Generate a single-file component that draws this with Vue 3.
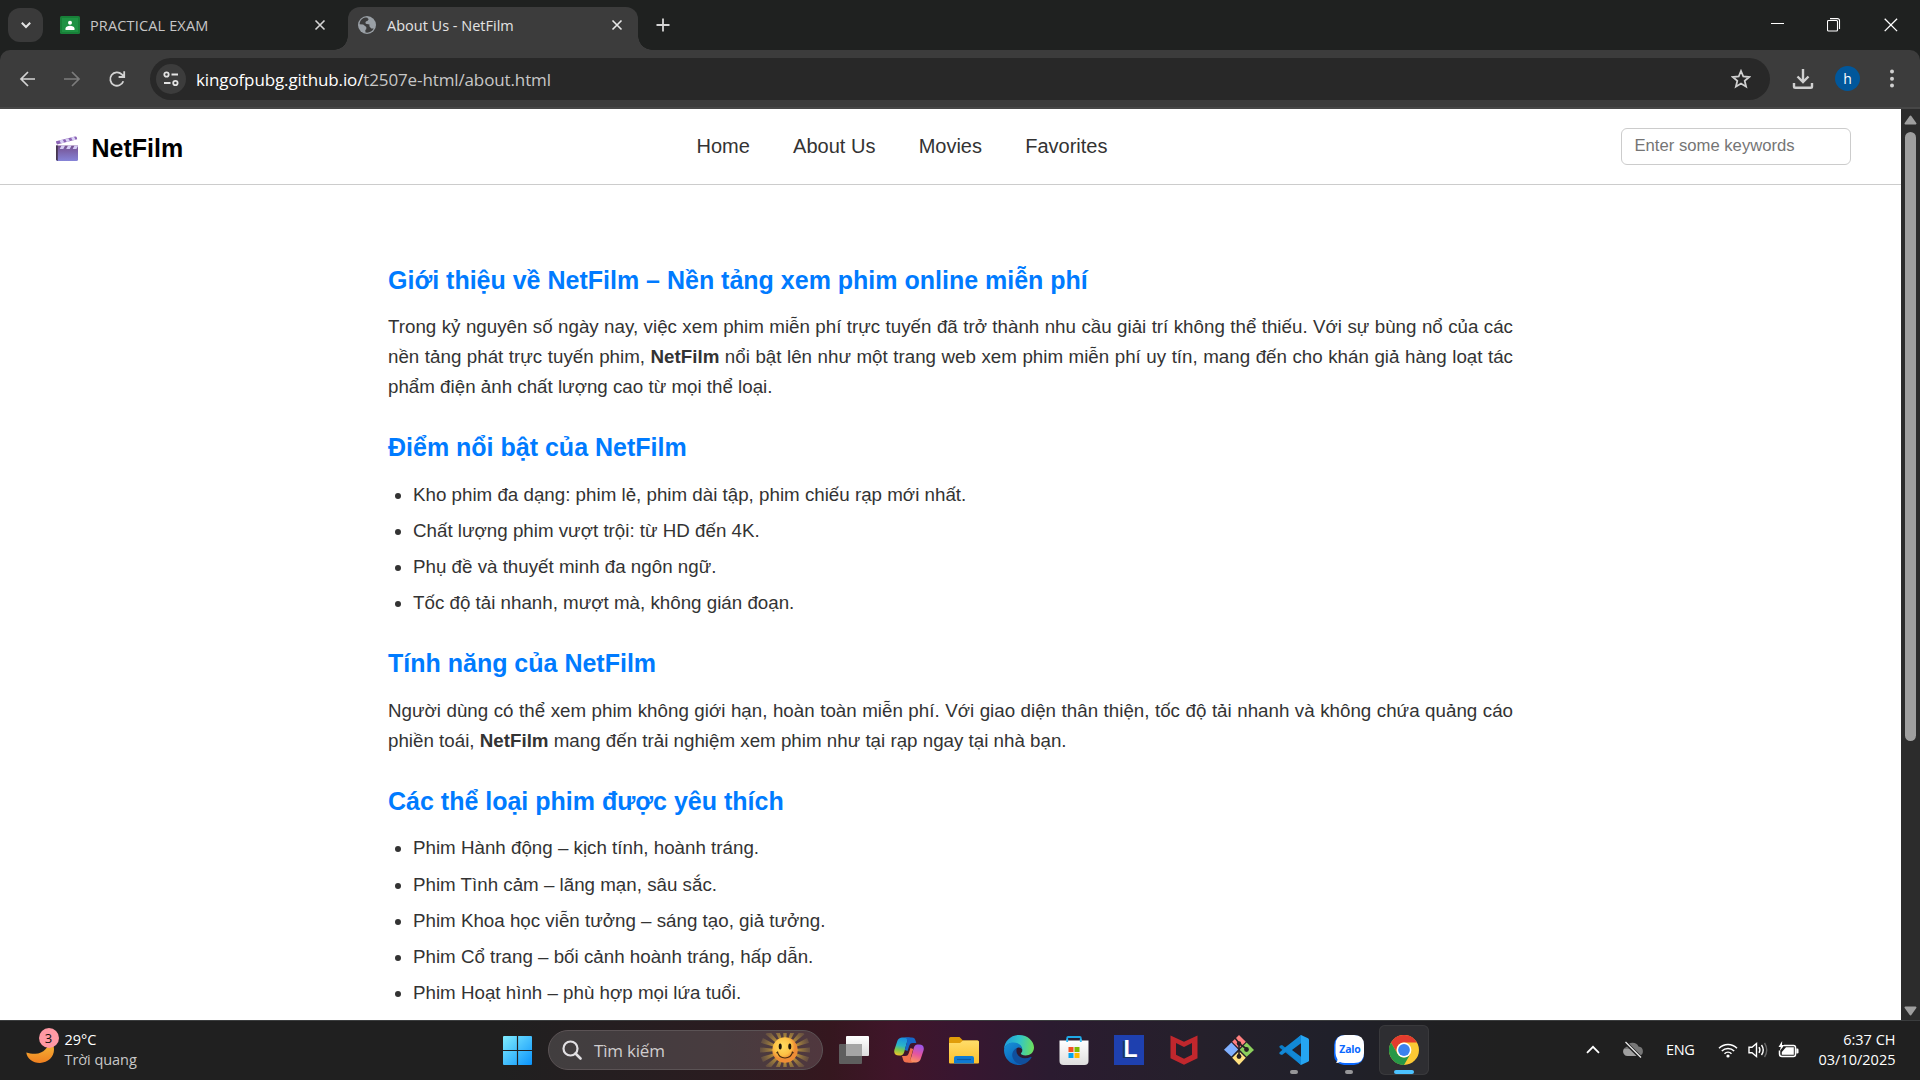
<script setup>
const nav = ['Home', 'About Us', 'Movies', 'Favorites']
const highlights = [
  'Kho phim đa dạng: phim lẻ, phim dài tập, phim chiếu rạp mới nhất.',
  'Chất lượng phim vượt trội: từ HD đến 4K.',
  'Phụ đề và thuyết minh đa ngôn ngữ.',
  'Tốc độ tải nhanh, mượt mà, không gián đoạn.',
]
const genres = [
  'Phim Hành động – kịch tính, hoành tráng.',
  'Phim Tình cảm – lãng mạn, sâu sắc.',
  'Phim Khoa học viễn tưởng – sáng tạo, giả tưởng.',
  'Phim Cổ trang – bối cảnh hoành tráng, hấp dẫn.',
  'Phim Hoạt hình – phù hợp mọi lứa tuổi.',
  'Phim Tài liệu – cùng hiểu nhiều hơn.',
]
const rays = Array.from({ length: 16 }, (_, i) => i * 22.5)
</script>

<template>
  <div class="screen">
    <div class="tabs">
      <div class="tabmenu">
        <svg width="12" height="12" viewBox="0 0 12 12"><path d="M1.8 3.8 6 8l4.200-4.200" fill="none" stroke="#e3e3e3" stroke-width="2" /></svg>
      </div>
      <div class="tab first">
        <svg width="20" height="18" viewBox="0 0 20 18">
          <rect width="20" height="18" rx="1.500" fill="#188038" /><rect x="2" y="2" width="16" height="14" fill="#1e9243" />
          <circle cx="10" cy="6.800" r="2" fill="#fff" /><path d="M5.500 14v-1.500c0-2 2.500-2.800 4.500-2.800s4.500.8 4.500 2.800V14z" fill="#fff" />
        </svg>
        <span class="t1">PRACTICAL EXAM</span>
        <svg class="x" width="12" height="12" viewBox="0 0 12 12"><path d="M1.500 1.500l9 9m0-9l-9 9" stroke="#d5d5d5" stroke-width="1.600" /></svg>
      </div>
      <div class="tab active">
        <svg width="18" height="18" viewBox="0 0 18 18">
          <circle cx="9" cy="9" r="9" fill="#9aa0a6" />
          <path d="M7.500 1.600C4 2.200 1.800 5 1.600 8.200l3.600.3 3.100 2.500v2.300l-1 .8.200 2.400c3.300.7 6.800-1 8.200-3.900l-2.500-.2-1.800-2.200.1-1.700-3.700-.8-.4-1.700 2.500-1.600 1-1.800c-1-.9-2.200-1.300-3.400-1z" fill="#3c3c3c" />
          <path d="M8.500 1.500c3 0 5.500 1.400 6.800 4l-2.900 1.100-1.900 1.300-2.100-.7-.3-1.500 2.300-.8.800-1.600z" fill="#9aa0a6" />
        </svg>
        <span class="t2">About Us - NetFilm</span>
        <svg class="x" width="12" height="12" viewBox="0 0 12 12"><path d="M1.500 1.500l9 9m0-9l-9 9" stroke="#e8e8e8" stroke-width="1.600" /></svg>
      </div>
      <svg class="plus" width="14" height="14" viewBox="0 0 14 14"><path d="M7 .5v13M.5 7h13" stroke="#d5d5d5" stroke-width="1.800" /></svg>
      <div class="winbtns">
        <svg width="14" height="14" viewBox="0 0 14 14"><path d="M1 5.500h13" stroke="#fff" stroke-width="1" /></svg>
        <svg width="14" height="14" viewBox="0 0 14 14" fill="none" stroke="#fff" stroke-width="1.100"><rect x=".5" y="2.500" width="10" height="10.500" rx="1" /><path d="M3 .6h7.500a2 2 0 0 1 2 2V11" /></svg>
        <svg width="14" height="14" viewBox="0 0 14 14"><path d="M.7.7l12.400 12.400m0-12.400L.7 13.100" stroke="#fff" stroke-width="1.300" /></svg>
      </div>
    </div>

    <div class="toolbar">
      <svg class="back" width="18" height="18" viewBox="0 0 18 18"><path d="M16 9H2.500M9 2L2 9l7 7" fill="none" stroke="#d3d3d3" stroke-width="1.700" /></svg>
      <svg class="fwd" width="18" height="18" viewBox="0 0 18 18"><path d="M1 9h14.500M9 2l7 7-7 7" fill="none" stroke="#7c7c7c" stroke-width="1.700" /></svg>
      <svg class="reload" width="18" height="18" viewBox="0 0 18 18"><path d="M15.300 11.200A6.700 6.700 0 1 1 13.800 4.400L16 6.600M16.200 1.200v5.800h-5.600" fill="none" stroke="#d3d3d3" stroke-width="1.800" /></svg>
      <div class="omni">
        <div class="site">
          <svg width="16" height="16" viewBox="0 0 16 16" fill="none" stroke="#e3e3e3" stroke-width="1.800"><circle cx="3.500" cy="3.500" r="2.200" /><path d="M8.500 3.500H15M1 12h6.500" /><circle cx="12.400" cy="12" r="2.200" /></svg>
        </div>
        <span class="url"><b>kingofpubg.github.io/</b>t2507e-html/about.html</span>
        <svg class="star" width="20" height="20" viewBox="0 0 20 20"><path d="M10 2l2.300 5.500 5.900.5-4.500 3.900 1.400 5.800L10 14.600l-5.100 3.100 1.400-5.800L1.800 8l5.900-.5z" fill="none" stroke="#d0d0d0" stroke-width="1.800" /></svg>
      </div>
      <svg class="dl" width="22" height="22" viewBox="0 0 22 22" fill="none" stroke="#d0d0d0" stroke-width="2.400"><path d="M11 1v13M5.500 8.500l5.500 5.500 5.500-5.500M2 15v3.500q0 1.300 1.300 1.300h15.400q1.300 0 1.300-1.300V15" /></svg>
      <div class="avatar">h</div>
      <svg class="dots" width="6" height="20" viewBox="0 0 6 20" fill="#d0d0d0"><circle cx="3" cy="2.600" r="2" /><circle cx="3" cy="9.700" r="2" /><circle cx="3" cy="16.500" r="2" /></svg>
    </div>

    <div class="view">
      <div class="page">
        <header>
          <div class="logo">
            <svg width="24" height="27" viewBox="0 0 24 27">
              <defs><linearGradient id="clap" x1="0" y1="0" x2="0" y2="1"><stop offset="0" stop-color="#75508f" /><stop offset="1" stop-color="#8684d8" /></linearGradient></defs>
              <path d="M1 6.300L20 1.500q1.500-.3 1.800 1l.4 1.700L2 9.500l-.8-1.800z" fill="#8b63b5" />
              <path d="M4.500 5.400l3-.8 1.800 3-3.300.9zM10.200 4l3-.8 1.800 3-3.300.8zM16 2.500l3-.8 1.600 3-3 .8z" fill="#d9d0f5" />
              <path d="M1 10.500h22v14q0 1.500-1.500 1.500h-19Q1 26 1 24.500z" fill="url(#clap)" /><path d="M1 10.500h1.800V26L1 24.800z" fill="#45354f" />
              <path d="M6.500 10.500h3.600l-1.800 3.600H4.700zM13 10.500h3.600l-1.800 3.600h-3.600zM19.500 10.500H23v.5l-1.600 3.100h-3.700z" fill="#d5ccf4" />
            </svg>
            <span>NetFilm</span>
          </div>
          <nav><a v-for="n in nav" :key="n">{{ n }}</a></nav>
          <input type="text" placeholder="Enter some keywords" />
        </header>
        <main>
          <h2>Giới thiệu về NetFilm – Nền tảng xem phim online miễn phí</h2>
          <p>Trong kỷ nguyên số ngày nay, việc xem phim miễn phí trực tuyến đã trở thành nhu cầu giải trí không thể thiếu. Với sự bùng nổ của các nền tảng phát trực tuyến phim, <strong>NetFilm</strong> nổi bật lên như một trang web xem phim miễn phí uy tín, mang đến cho khán giả hàng loạt tác phẩm điện ảnh chất lượng cao từ mọi thể loại.</p>
          <h2>Điểm nổi bật của NetFilm</h2>
          <ul><li v-for="t in highlights" :key="t">{{ t }}</li></ul>
          <h2>Tính năng của NetFilm</h2>
          <p>Người dùng có thể xem phim không giới hạn, hoàn toàn miễn phí. Với giao diện thân thiện, tốc độ tải nhanh và không chứa quảng cáo phiền toái, <strong>NetFilm</strong> mang đến trải nghiệm xem phim như tại rạp ngay tại nhà bạn.</p>
          <h2>Các thể loại phim được yêu thích</h2>
          <ul><li v-for="t in genres" :key="t">{{ t }}</li></ul>
        </main>
      </div>
      <div class="scroll">
        <svg width="13" height="10" viewBox="0 0 13 10"><path d="M6.500 1.500L11.500 8.500h-10z" fill="#9f9f9f" stroke="#9f9f9f" stroke-width="2" stroke-linejoin="round" /></svg>
        <div class="thumb"></div>
        <svg class="down" width="13" height="10" viewBox="0 0 13 10"><path d="M6.500 8.500L11.500 1.500h-10z" fill="#9f9f9f" stroke="#9f9f9f" stroke-width="2" stroke-linejoin="round" /></svg>
      </div>
    </div>

    <div class="taskbar">
      <div class="weather">
        <div class="moon">
          <svg width="28" height="24" viewBox="0 0 28 24"><defs><linearGradient id="mn" x1="0" y1="0" x2="0" y2="1"><stop offset="0" stop-color="#f5c23c" /><stop offset="1" stop-color="#f08020" /></linearGradient></defs><path d="M.3 13.500C1 20 7 24 14 23.900 22 23.800 28 18 28 10.500 28 6 26 2 23 0c1 8-6 15-14 14.800-3.500 0-6-.6-8.700-1.300z" fill="url(#mn)" /></svg>
          <span class="badge">3</span>
        </div>
        <div class="wtext"><div>29°C</div><div class="dim">Trời quang</div></div>
      </div>

      <div class="apps">
        <svg class="win" width="29" height="29" viewBox="0 0 29 29"><defs><linearGradient id="wn" x1="0" y1="0" x2="1" y2="1"><stop offset="0" stop-color="#80edff" /><stop offset="1" stop-color="#0a93fb" /></linearGradient></defs><path d="M1 0h12.900v13.900H0V1q0-1 1-1zM15.100 0H28q1 0 1 1v12.900H15.100zM0 15.100h13.900V29H1q-1 0-1-1zM15.100 15.100H29V28q0 1-1 1H15.100z" fill="url(#wn)" /></svg>
        <div class="search">
          <svg width="20" height="20" viewBox="0 0 20 20" fill="none" stroke="#e2e0e3"><circle cx="8.500" cy="8.500" r="7" stroke-width="2.200" /><path d="M13.500 13.500l5 5" stroke-width="2.600" stroke-linecap="round" /></svg>
          <span>Tìm kiếm</span>
          <svg class="sun" width="50" height="34" viewBox="-25 -17 50 34">
            <defs><radialGradient id="sn" cx=".4" cy=".35"><stop offset="0" stop-color="#ffdc62" /><stop offset=".7" stop-color="#fcc044" /><stop offset="1" stop-color="#ee8d36" /></radialGradient>
            <radialGradient id="ry" gradientUnits="userSpaceOnUse" cx="0" cy="0" r="25"><stop offset=".5" stop-color="#b08a38" /><stop offset="1" stop-color="#8d7446" stop-opacity=".35" /></radialGradient></defs>
            <path v-for="r in rays" :key="r" d="M-1.300-12L-2.600-25H2.600L1.300-12z" :transform="`rotate(${r})`" fill="url(#ry)" />
            <circle r="12.700" fill="url(#sn)" />
            <ellipse cx="-4.800" cy="-3.500" rx="1.500" ry="3" fill="#1d1408" /><ellipse cx="4.800" cy="-3.500" rx="1.500" ry="3" fill="#1d1408" />
            <path d="M-7.500 2.200C-5.500 10 5.500 10 7.500 2.200M-8.500 3l1.600-1.300M8.500 3L6.900 1.700" fill="none" stroke="#4a2a10" stroke-width="1.100" />
          </svg>
        </div>
        <div class="app">
          <svg width="30" height="28" viewBox="0 0 30 28"><defs><linearGradient id="tv" x1="0" y1="0" x2="0" y2="1"><stop offset="0" stop-color="#fff" /><stop offset="1" stop-color="#dcdcdc" /></linearGradient></defs><rect x="7" width="23" height="20" rx="1" fill="url(#tv)" /><rect y="8" width="23" height="20" rx="1" fill="#5e5e5e" /><rect x="7" y="8" width="16" height="12" fill="#a5a5a5" /></svg>
        </div>
        <div class="app">
          <svg width="30" height="28" viewBox="0 0 30 28">
            <defs>
              <linearGradient id="cp1" x1=".5" y1="0" x2=".3" y2="1"><stop offset="0" stop-color="#1a90e0" /><stop offset=".45" stop-color="#2ab4c9" /><stop offset=".7" stop-color="#7cc84a" /><stop offset="1" stop-color="#ecc32b" /></linearGradient>
              <linearGradient id="cp2" x1=".6" y1="0" x2=".3" y2="1"><stop offset="0" stop-color="#9c55e8" /><stop offset=".5" stop-color="#e5559e" /><stop offset="1" stop-color="#ff9a58" /></linearGradient>
            </defs>
            <path d="M9 1.500h8c-2 0-3 1-3.700 3.500L10.500 15c-1 3.500-2 4.500-4.500 4.500H5c-4 0-5.500-2.500-4.500-6L3 6c1-3.500 3-4.500 6-4.500z" fill="url(#cp1)" />
            <path d="M11 1.500h7c2 0 3 1 3.500 3L22.300 7H19c-2.500 0-3.200 1-4 3.500L13.500 15l-2.700-1 2.200-8c.6-2 .4-3.300-2-4.500z" fill="#1667c8" />
            <path d="M21 26.500h-8c2 0 3-1 3.700-3.500L19.500 13c1-3.500 2-4.500 4.500-4.500h1c4 0 5.500 2.500 4.500 6L27 22c-1 3.500-3 4.500-6 4.500z" fill="url(#cp2)" />
            <path d="M19 26.500h-6.500c-2 0-3-1-3.500-3L8 20h3c2.500 0 3.200-1 4-3.500l1.500-4.500 2.700 1L17 21c-.6 2.500-.2 4.300 2 5.500z" fill="#f0704e" />
          </svg>
        </div>
        <div class="app">
          <svg width="30" height="27" viewBox="0 0 30 27"><defs><linearGradient id="fd" x1="0" y1="0" x2="0" y2="1"><stop offset="0" stop-color="#ffdd6a" /><stop offset="1" stop-color="#fbc02d" /></linearGradient></defs><path d="M0 1.500Q0 0 1.500 0h9L14 3.500h14.500Q30 3.500 30 5v8H0z" fill="#e09d0a" /><path d="M0 6h11l3-2.500h14.500Q30 3.500 30 5v20.500q0 1-1 1H1q-1 0-1-1z" fill="url(#fd)" /><path d="M5 26.500V21q0-2 2-2h16q2 0 2 2v5.500z" fill="#0f7bd4" /><path d="M8 22.500h14" stroke="#0b5aa5" stroke-width="1.200" /></svg>
        </div>
        <div class="app">
          <svg width="30" height="30" viewBox="0 0 30 30">
            <defs><linearGradient id="e1" x1="0" y1=".4" x2="1" y2=".5"><stop offset="0" stop-color="#1f9cdc" /><stop offset=".5" stop-color="#31c5c9" /><stop offset="1" stop-color="#6ee05a" /></linearGradient><linearGradient id="e2" x1="0" y1="0" x2=".6" y2="1"><stop offset="0" stop-color="#1793d8" /><stop offset="1" stop-color="#0a60b8" /></linearGradient></defs>
            <path d="M0 15C0 6 7 0 15 0c9 0 15 6.500 15 12.500 0 5-4 8-8.500 8-3.500 0-5-1.300-4.500-2.300.8-.9 1.300-1.700 1.300-3C18.300 11 14 8 9.500 8 4 8 .5 11.500 0 15z" fill="url(#e1)" />
            <path d="M0 15C.5 10 5 7.500 9.500 7.500c5 0 8.700 3.200 8.800 7-1-2-3-2.500-4.800-1.800C11 13.800 8.500 17 9.500 21c1 4.500 5 7.500 9 8.500-1 .4-2.300.5-3.500.5C6.500 30 0 23.500 0 15z" fill="url(#e2)" />
            <path d="M13 13c-4 2-5.500 5.500-4.500 9 1.200 4.500 5.500 7.800 10 7.500 4-1 7.500-4 9-7 .2-.8-.4-1-1-.6-5 2.500-11.500 1.500-13.500-3.400-1-2.500-.5-4.500 0-5.500z" fill="#104f9d" />
          </svg>
        </div>
        <div class="app">
          <svg width="30" height="30" viewBox="0 0 30 30"><defs><linearGradient id="st" x1="0" y1="0" x2="0" y2="1"><stop offset="0" stop-color="#fff" /><stop offset="1" stop-color="#dedede" /></linearGradient></defs><path d="M8.200 8V3q0-1 1-1h11.600q1 0 1 1v5" fill="none" stroke="#1fa8e6" stroke-width="1.800" /><path d="M.5 5.500h29V26q0 4-4 4h-21q-4 0-4-4z" fill="url(#st)" /><path d="M8.200 4v3m13.600-3v3" stroke="#2fb8f0" stroke-width="1.800" /><path d="M9.500 12h5v5h-5z" fill="#f25022" /><path d="M15.500 12h5v5h-5z" fill="#7fba00" /><path d="M9.500 18h5v5h-5z" fill="#00a4ef" /><path d="M15.500 18h5v5h-5z" fill="#ffb900" /></svg>
        </div>
        <div class="app"><div class="lbox">L</div></div>
        <div class="app">
          <svg width="28" height="30" viewBox="0 0 28 30"><path d="M.5.500L14 6.800 27.500.5v22.800L14 29.800.5 23.300zM6 8v11.800l8 4 8-4V8l-8 4z" fill="#c1272d" fill-rule="evenodd" /></svg>
        </div>
        <div class="app">
          <svg width="30" height="30" viewBox="0 0 30 30"><path d="M15 0l6.800 6.800L15 13.600 8.200 6.800z" fill="#ff8080" /><path d="M7.400 7.600l6.800 6.900-6.800 7L0 14.800z" fill="#80b0ff" /><path d="M22.600 7.600L30 15l-7.400 6.700-6.900-7z" fill="#8ccf5c" /><path d="M15 16.200l6.800 6.600L15 30l-6.800-7.200z" fill="#ffe180" /><path d="M11 3l4 5v13M15 8.500l8.500 6" stroke="#261f24" stroke-width="1.600" fill="none" /><circle cx="15" cy="8.500" r="2.200" fill="#261f24" /><circle cx="15" cy="21.500" r="2.400" fill="#261f24" /><circle cx="22.500" cy="14.500" r="2.400" fill="#261f24" /></svg>
        </div>
        <div class="app">
          <svg width="30" height="30" viewBox="0 0 30 30"><path d="M22 0L7.500 13.500 3 10 1 10.800q-1.300 1 0 2.200L22 30z" fill="#0a7dc8" /><path d="M22 30L7.500 16.500 3 20l-2-.8q-1.300-1 0-2.200l5-4.500L22 0l.5 8L13 15l9.500 7z" fill="#1288d6" /><path d="M22 0l7 3.300q1 .5 1 1.500v20.400q0 1-1 1.500L22 30z" fill="#25a5f2" /><path d="M22 8.300v13.400L13 15z" fill="#23202c" /></svg>
          <i class="run"></i>
        </div>
        <div class="app">
          <div class="zalo"><svg width="30" height="30" viewBox="0 0 30 30"><rect width="30" height="30" rx="10" fill="#0a68ff" /><path d="M11 0h9q10 0 10 10v8q0 10-10 10h-9q-3 0-5-1-1.500 1-4 1 1.500-1.500 1.500-3.500Q1.500 21 1.500 18v-8Q1.500 0 11 0z" fill="#fff" /></svg><span>Zalo</span></div>
          <i class="run"></i>
        </div>
        <div class="app current">
          <svg width="30" height="30" viewBox="0 0 30 30"><circle cx="15" cy="15" r="15" fill="#fcc934" /><path d="M2 7.500A15 15 0 0 1 28 7.500H15A7.500 7.500 0 0 0 8.500 18.800z" fill="#e33b2e" /><path d="M2 7.500l6.500 11.300A7.500 7.500 0 0 0 21.500 18.800L15 30A15 15 0 0 1 2 7.500z" fill="#279847" /><circle cx="15" cy="15" r="7.400" fill="#fff" /><circle cx="15" cy="15" r="5.900" fill="#3b82ee" /></svg>
          <i class="run on"></i>
        </div>
      </div>

      <div class="tray">
        <svg class="chev" width="14" height="9" viewBox="0 0 14 9"><path d="M1 7.800l6-6 6 6" fill="none" stroke="#fff" stroke-width="1.800" /></svg>
        <svg class="cloud" width="22" height="18" viewBox="0 0 22 18"><path d="M5.500 15A4.600 4.600 0 0 1 4.500 6 6.500 6.500 0 0 1 16.500 5.500 4.800 4.800 0 0 1 17 15z" fill="#777" /><path d="M5.500 15A4.600 4.600 0 0 1 2 8l8 0 9 7z" fill="#a0a0a0" /><path d="M3 1l15.500 15.500" stroke="#202020" stroke-width="3.500" /><path d="M3.500 1L19 16.500" stroke="#eee" stroke-width="1.300" /></svg>
        <span class="lang">ENG</span>
        <svg class="wifi" width="20" height="16" viewBox="0 0 20 16" fill="none" stroke="#fff" stroke-width="1.500"><path d="M1 6.200a12.700 12.700 0 0 1 18 0M3.800 9a8.800 8.800 0 0 1 12.400 0M6.500 11.700a5 5 0 0 1 7 0" /><circle cx="10" cy="14" r="1.600" fill="#fff" stroke="none" /></svg>
        <svg class="vol" width="21" height="18" viewBox="0 0 21 18" fill="none" stroke="#fff" stroke-width="1.400"><path d="M1 6.200h3L8.500 2.500v13L4 11.800H1z" /><path d="M11 6.200q1.800 2.800 0 5.600M13.500 4q3.500 5 0 10" /><path d="M16.500 2q4.500 7 0 14" stroke="#666" /></svg>
        <svg class="bat" width="21" height="18" viewBox="0 0 21 18"><path d="M6 4.500h9.500q2 0 2 2v7q0 2-2 2H4q-2.500 0-2.500-2.500V9.500" fill="none" stroke="#fff" stroke-width="1.500" /><path d="M8 6.300h7.800v7.500H3.800V11z" fill="#fff" /><path d="M18.300 7.500h1q1.200 0 1.200 1.200v2.600q0 1.200-1.200 1.200h-1z" fill="#fff" /><path d="M4.200 0L.5 6h2.300L1.800 10 6.500 4H4z" fill="#fff" /></svg>
        <div class="clock"><div>6:37 CH</div><div>03/10/2025</div></div>
      </div>
    </div>
  </div>
</template>

<style>
body { margin: 0; overflow: hidden; }
</style>

<style scoped>
* { box-sizing: border-box; }
svg { display: block; flex: none; }
.screen { width: 1920px; height: 1080px; display: flex; flex-direction: column; overflow: hidden; background: #1f2120; font-family: "Open Sans", "Noto Sans", sans-serif; }

.tabs { height: 50px; flex: none; display: flex; align-items: flex-start; padding-left: 8px; color: #e3e3e3; font-size: 14.500px; }
.tabmenu { width: 35px; height: 34px; margin-top: 8px; border-radius: 12px; background: #3a3a3a; display: flex; align-items: center; justify-content: center; }
.tab { display: flex; align-items: center; white-space: nowrap; }
.tab.first { width: 305px; height: 36px; margin-top: 7px; padding-left: 17px; color: #c7c7c7; }
.t1 { margin-left: 10px; width: 224px; letter-spacing: .15px; }
.tab.active { position: relative; width: 290px; height: 43px; margin-top: 7px; padding: 0 0 7px 10px; background: #3c3c3c; border-radius: 12px 12px 0 0; }
.tab.active::before, .tab.active::after { content: ""; position: absolute; bottom: 0; width: 14px; height: 14px; }
.tab.active::before { left: -14px; background: radial-gradient(circle at 0 0, transparent 13.500px, #3c3c3c 14px); }
.tab.active::after { right: -14px; background: radial-gradient(circle at 100% 0, transparent 13.500px, #3c3c3c 14px); }
.t2 { margin-left: 11px; width: 224px; }
.plus { margin: 18px 0 0 18px; }
.winbtns { margin: 18px 22px 0 auto; display: flex; gap: 43px; }

.toolbar { height: 59px; flex: none; display: flex; align-items: flex-start; background: #3c3c3c; border-radius: 10px 10px 0 0; border-bottom: 2px solid #474747; padding-left: 19px; }
.back { margin-top: 20px; }
.fwd { margin: 20px 0 0 26px; }
.reload { margin: 20px 0 0 27px; }
.omni { width: 1620px; height: 42px; margin: 8px 0 0 24px; border-radius: 21px; background: #282828; display: flex; align-items: center; padding-left: 6px; }
.site { width: 30px; height: 30px; border-radius: 50%; background: #3c3c3c; display: flex; align-items: center; justify-content: center; }
.url { margin-left: 10px; font-size: 17px; letter-spacing: -.12px; color: #c7c7c7; white-space: nowrap; flex: 1; }
.url b { font-weight: 400; color: #fff; }
.star { margin-right: 19px; }
.dl { margin: 18px 0 0 21.500px; }
.avatar { width: 25px; height: 25px; margin: 16px 0 0 21.500px; border-radius: 50%; background: #01579b; color: #fff; font-size: 14px; line-height: 25px; text-align: center; }
.dots { margin: 19px 0 0 29px; }

.view { flex: 1; min-height: 0; display: flex; }
.page { width: 1901px; background: #fff; overflow: hidden; font-family: "Liberation Sans", Arial, sans-serif; color: #333; }
header { height: 76px; border-bottom: 1px solid #ccc; display: flex; align-items: flex-start; padding-left: 55px; }
.logo { width: 641.500px; display: flex; color: #000; font-size: 25px; font-weight: 700; line-height: 30px; padding-top: 24px; }
.logo svg { margin-top: 2px; }
.logo span { margin-left: 12.500px; }
nav { display: flex; gap: 43.250px; font-size: 20px; line-height: 24px; margin-top: 25px; }
input { width: 230px; height: 37px; margin: 19px 50px 0 auto; border: 1px solid #ccc; border-radius: 6px; padding: 0 12.500px 2px; font: 16.670px "Liberation Sans", Arial, sans-serif; }
input::placeholder { color: #757575; }
main { width: 1125px; margin: 0 auto; padding-top: 74.500px; font-size: 18.750px; line-height: 30px; }
h2 { margin: 0 0 12.500px; font-size: 25px; line-height: 40px; color: #007bff; }
p { margin: 0; text-align: justify; }
p + h2, ul + h2 { margin-top: 25px; }
ul { margin: 0; padding-left: 25px; }
li { margin-bottom: 6.250px; }
li:last-child { margin-bottom: 0; }
.scroll { width: 19px; background: #2c2c2c; display: flex; flex-direction: column; align-items: center; padding: 6px 0 4px; }
.thumb { width: 11px; height: 609px; margin-top: 7px; border-radius: 6px; background: #9f9f9f; }
.down { margin-top: auto; }

.taskbar { height: 60px; flex: none; display: flex; border-top: 1px solid #3b3d3e; color: #fff; background: linear-gradient(90deg, #202020 0, #202020 500px, #2a1c20 720px, #35171f 830px, #40152a 895px, #381630 960px, #2b1b30 1050px, #25202b 1200px, #20202a 1330px, #202022 1440px, #202020 1500px); font-size: 14.500px; }
.weather { width: 503px; display: flex; }
.moon { position: relative; width: 28px; margin: 18px 0 0 26px; }
.badge { position: absolute; left: 12.500px; top: -11.500px; width: 20px; height: 20px; border-radius: 50%; background: #ff99a4; color: #111; font-size: 13px; line-height: 20px; text-align: center; }
.wtext { margin: 9px 0 0 10.500px; line-height: 20px; letter-spacing: -.05px; }
.dim { color: #c8c8c8; }
.apps { display: flex; align-items: flex-start; width: 1058px; }
.win { margin-top: 15px; }
.search { width: 275px; height: 40px; margin: 9px 6px 0 16px; border: 1px solid #5b5355; border-radius: 20px; background: rgba(255, 255, 255, .14); display: flex; align-items: center; padding-left: 13px; }
.search span { margin-left: 12px; width: 150px; font-size: 17px; color: #d0cdce; letter-spacing: -.2px; }
.sun { margin-left: 16px; }
.app { position: relative; width: 50px; height: 50px; margin: 4px 5px 0 0; flex: none; display: flex; align-items: center; justify-content: center; border-radius: 6px; }
.current { background: #2e2e32; box-shadow: inset 0 0 0 1px #39393c; }
.run { position: absolute; bottom: 1px; left: 21px; width: 8px; height: 4px; border-radius: 2px; background: #969699; }
.run.on { left: 15px; width: 20px; background: #4cc2ff; }
.lbox { width: 30px; height: 30px; background: #1e40af; color: #fff; font: 700 23px/29px "Liberation Sans", sans-serif; text-align: center; padding-left: 3px; text-shadow: -2px 1px 0 #173463; }
.zalo { position: relative; }
.zalo span { position: absolute; left: 0; top: 7px; width: 32px; text-align: center; font: 700 10.500px/14px "Open Sans", sans-serif; color: #0a68ff; letter-spacing: -.2px; }
.tray { display: flex; align-items: flex-start; flex: 1; }
.chev { margin: 24px 0 0 25px; }
.cloud { margin: 20px 0 0 22px; }
.lang { width: 30px; margin: 19px 0 0 22px; line-height: 20px; letter-spacing: -.4px; }
.wifi { margin: 21px 0 0 22px; }
.vol { margin: 20px 0 0 10px; }
.bat { margin: 20px 0 0 9px; }
.clock { margin: 9px 24.500px 0 auto; text-align: right; line-height: 20px; letter-spacing: 0; }
</style>
